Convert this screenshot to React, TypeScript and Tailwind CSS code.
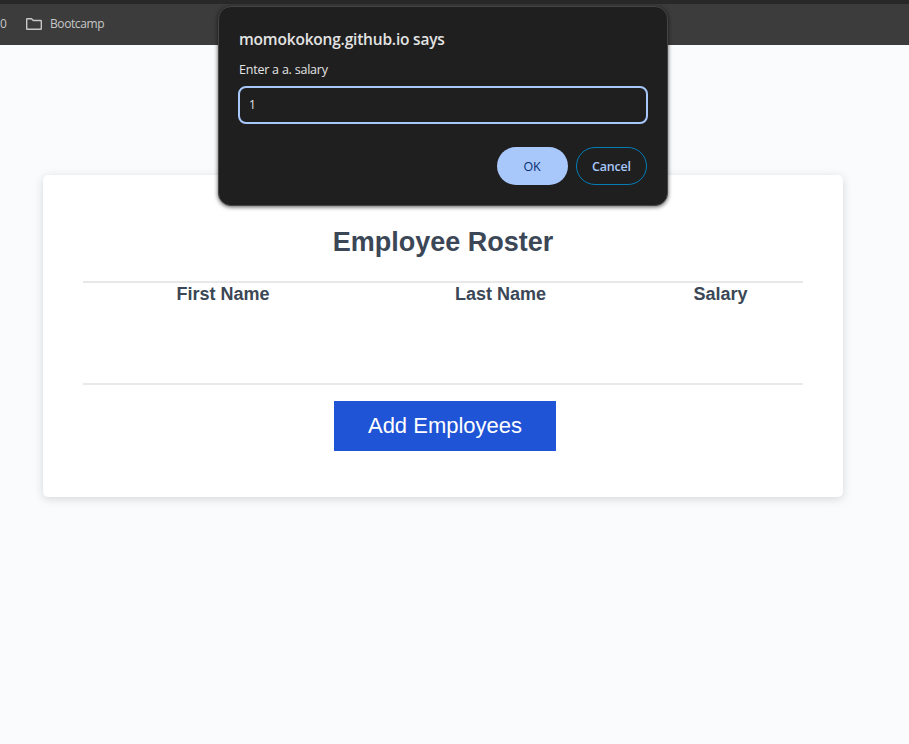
function BookmarksBar() {
  return (
    <header className="h-[45px] shrink-0 overflow-hidden border-t-4 border-[#282828] bg-[#3c3c3c] text-[#c7c7c7]">
      <div className="flex h-10 items-center font-['Open_Sans',sans-serif] text-[12px] leading-4">
        <span className="w-[26px]">0</span>
        <svg className="mr-2 block shrink-0" width="16" height="12" viewBox="0 0 16 12" fill="none" stroke="currentColor" strokeWidth="1.4">
          <path d="M.7 10.7V1.3Q.7.7 1.3.7H5.5L7.3 2.5H14.7Q15.3 2.5 15.3 3.1V10.7Q15.3 11.3 14.7 11.3H1.3Q.7 11.3.7 10.7Z" />
        </svg>
        <span className="tracking-[-0.4px] whitespace-nowrap">Bootcamp</span>
      </div>
    </header>
  );
}

function Roster() {
  return (
    <section className="mt-[130px] ml-[43px] h-[322px] w-[800px] rounded-[5px] bg-white px-10 pt-[50px] text-center font-['Liberation_Sans',Arial,sans-serif] text-[#3b4756] shadow-[0_2px_10px_rgba(0,0,0,0.15)]">
      <h1 className="h-14 text-[27px] leading-[34px] font-bold">Employee Roster</h1>
      <div className="h-[104px] border-y-2 border-[#e8e8e8]">
        <div className="grid grid-cols-[280px_275px_165px] text-[18px] leading-[22px] font-bold">
          <span>First Name</span>
          <span>Last Name</span>
          <span>Salary</span>
        </div>
      </div>
      <button className="mt-4 ml-[3px] h-[50px] w-[222px] bg-[#2054d6] pl-px text-[22px] leading-[50px] text-white">
        Add Employees
      </button>
    </section>
  );
}

function PromptDialog() {
  return (
    <div className="absolute top-[6px] left-[218px] h-[200px] w-[450px] rounded-[13px] border border-[#454545] bg-[#1f1f1f] px-[19px] pt-[22px] font-['Open_Sans',sans-serif] text-[#e3e3e3] shadow-[0_1px_4px_rgba(0,0,0,0.65)]">
      <h2 className="pl-px text-[15.5px] leading-5 font-semibold tracking-[-0.2px] whitespace-nowrap">momokokong.github.io says</h2>
      <p className="mt-[11px] pl-px text-[12.5px] leading-5 tracking-[-0.22px] whitespace-nowrap">Enter a a. salary</p>
      <div className="mt-[6px] flex h-[38px] items-center rounded-lg border-2 border-[#a8c7fa] px-[9px] text-[12px]">1</div>
      <div className="mt-[23px] flex justify-end gap-2 pr-px text-[12.5px] tracking-[-0.2px]">
        <button className="h-[38px] w-[71px] rounded-full bg-[#a8c7fa] pt-0.5 pr-px text-[#062e6f]">OK</button>
        <button className="h-[38px] w-[71px] rounded-full border border-[#047db7] pt-0.5 font-semibold text-[#a8c7fa]">Cancel</button>
      </div>
    </div>
  );
}

export default function App() {
  return (
    <main className="relative flex h-[744px] w-[909px] flex-col overflow-hidden bg-[#f9fbfd]">
      <BookmarksBar />
      <Roster />
      <PromptDialog />
    </main>
  );
}
